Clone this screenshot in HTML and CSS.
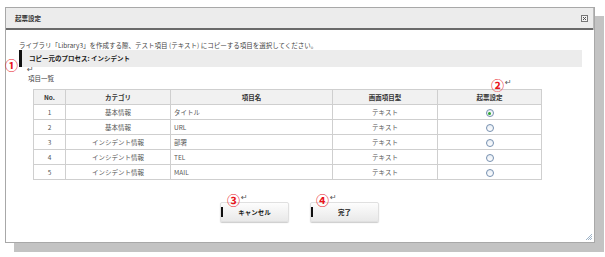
FILE: index.html
```html
<!DOCTYPE html>
<html lang="ja">
<head>
    <meta charset="UTF-8">
    <title>起票設定</title>
    <link rel="stylesheet" href="styles.css">
</head>
<body>
    <div class="page">
        <div class="dialog">
            <div class="titlebar">
                <span class="title">起票設定</span>
                <svg class="close" width="7" height="7" viewBox="0 0 7 7">
                    <rect x="0.5" y="0.5" width="6" height="6" fill="#f4f4f4" stroke="#777"/>
                    <path d="M2 2 L5 5 M5 2 L2 5" stroke="#555" stroke-width="1"/>
                </svg>
            </div>
            <div class="body">
                <p class="lead">ライブラリ「Library3」を作成する際、テスト項目 (テキスト) にコピーする項目を選択してください。</p>
                <div class="section">コピー元のプロセス: インシデント</div>
                <div class="mark">↵</div>
                <div class="caption">項目一覧</div>
                <table class="items">
                    <thead>
                        <tr>
                            <th class="c-no">No.</th>
                            <th class="c-cat">カテゴリ</th>
                            <th class="c-name">項目名</th>
                            <th class="c-type">画面項目型</th>
                            <th class="c-sel">起票設定</th>
                        </tr>
                    </thead>
                    <tbody>
                        <tr><td>1</td><td>基本情報</td><td class="left">タイトル</td><td>テキスト</td><td><span class="radio checked"></span></td></tr>
                        <tr><td>2</td><td>基本情報</td><td class="left">URL</td><td>テキスト</td><td><span class="radio"></span></td></tr>
                        <tr><td>3</td><td>インシデント情報</td><td class="left">部署</td><td>テキスト</td><td><span class="radio"></span></td></tr>
                        <tr><td>4</td><td>インシデント情報</td><td class="left">TEL</td><td>テキスト</td><td><span class="radio"></span></td></tr>
                        <tr><td>5</td><td>インシデント情報</td><td class="left">MAIL</td><td>テキスト</td><td><span class="radio"></span></td></tr>
                    </tbody>
                </table>
                <div class="actions">
                    <button class="btn">キャンセル</button>
                    <button class="btn">完了</button>
                </div>
            </div>

            <span class="note n1">①</span>
            <span class="note n2">②<i>↵</i></span>
            <span class="note n3">③<i>↵</i></span>
            <span class="note n4">④<i>↵</i></span>

            <svg class="grip" width="7" height="7" viewBox="0 0 7 7">
                <path d="M7 1 L1 7 M7 3 L3 7 M7 5 L5 7" stroke="#9fb4c8" stroke-width="1"/>
            </svg>
        </div>
        <div class="mark after">↵</div>
    </div>
</body>
</html>
```

FILE: styles.css
```css
body {
    margin: 0;
    background-color: #fff;
    font-family: "Noto Sans CJK JP", "DejaVu Sans", sans-serif;
    color: #333;
}
.page {
    padding: 7px 0 0 5px;
}
.dialog {
    position: relative;
    width: 588px;
    height: 234px;
    border: 1px solid #a8a8a8;
    background-color: #fff;
    box-shadow: 9px 9px 0 #c3c3c3;
}
.titlebar {
    display: flex;
    align-items: center;
    justify-content: space-between;
    height: 20px;
    margin-right: 1px;
    padding: 0 5px 0 9px;
    background-color: #ececec;
    border-bottom: 2px solid #6a6a6a;
    box-shadow: 1px 0 0 #bbb;
}
.title {
    font-size: 6.5px;
    font-weight: bold;
    color: #333;
}
.close {
    display: block;
}
.body {
    padding: 10px 12px 0 13px;
}
.lead {
    margin: 0;
    font-size: 6.5px;
    line-height: 10px;
    color: #444;
}
.section {
    height: 17px;
    line-height: 17px;
    padding-left: 7px;
    background-color: #ececec;
    border-left: 3px solid #111;
    font-size: 6.5px;
    font-weight: bold;
    color: #222;
}
.mark {
    font-family: "DejaVu Sans", sans-serif;
    font-size: 8px;
    line-height: 6px;
    color: #555;
}
.body > .mark {
    padding-left: 8px;
}
.mark.after {
    padding: 3px 0 0 14px;
}
.caption {
    padding-left: 9px;
    font-size: 6.5px;
    line-height: 10px;
    color: #444;
}
.items {
    width: 509px;
    margin: 6px 0 0 14px;
    border-collapse: collapse;
    font-size: 6.5px;
    color: #555;
}
.items th,
.items td {
    height: 14px;
    padding: 0 3px;
    border: 1px solid #cfcfcf;
    text-align: center;
    line-height: 14px;
}
.items th {
    background-color: #f1f1f1;
    font-weight: bold;
    color: #333;
}
.items td.left {
    text-align: left;
}
.c-no { width: 25px; }
.c-cat { width: 98px; }
.c-name { width: 155px; }
.c-type { width: 98px; }
.radio {
    display: inline-block;
    position: relative;
    width: 6px;
    height: 6px;
    border: 1px solid #7690b0;
    border-radius: 50%;
    background: linear-gradient(#e8eef5, #fff);
    vertical-align: middle;
}
.radio.checked::after {
    content: "";
    position: absolute;
    left: 1.5px;
    top: 1.5px;
    width: 3px;
    height: 3px;
    border-radius: 50%;
    background-color: #2fa52f;
}
.actions {
    display: flex;
    justify-content: center;
    gap: 21px;
    margin-top: 22px;
    padding-right: 2px;
}
.btn {
    position: relative;
    width: 69px;
    height: 20px;
    padding: 0;
    border: 1px solid #e0e0e0;
    border-radius: 2px;
    background: linear-gradient(#fdfdfd, #e9e9e9);
    box-shadow: 0 1px 1px #ccc;
    font-family: inherit;
    font-size: 6.5px;
    font-weight: bold;
    color: #222;
}
.btn::before {
    content: "";
    position: absolute;
    left: 0;
    top: 4px;
    width: 2px;
    height: 10px;
    background-color: #111;
}
.note {
    position: absolute;
    font-size: 13px;
    font-weight: bold;
    line-height: 12px;
    color: #e8141c;
    white-space: nowrap;
}
.note i {
    font-style: normal;
    font-weight: normal;
    font-family: "DejaVu Sans", sans-serif;
    font-size: 8px;
    line-height: 8px;
    color: #555;
    vertical-align: top;
    margin-left: 1px;
}
.n1 { left: -1px; top: 51px; }
.n2 { left: 485px; top: 71px; }
.n3 { left: 221px; top: 186px; }
.n4 { left: 310px; top: 186px; }
.grip {
    position: absolute;
    right: 2px;
    bottom: 2px;
}
```
